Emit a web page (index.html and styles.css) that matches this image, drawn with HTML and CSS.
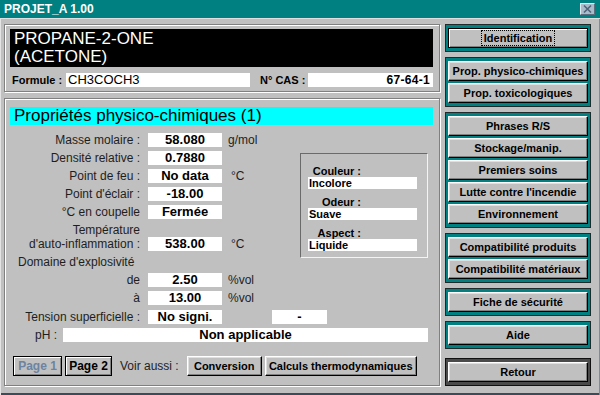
FILE: index.html
```html
<!DOCTYPE html>
<html lang="fr">
<head>
<meta charset="utf-8">
<title>PROJET_A 1.00</title>
<link rel="stylesheet" href="styles.css">
</head>
<body>
<div class="window">
  <div class="titlebar">
    <span class="title">PROJET_A 1.00</span>
    <span class="close"><svg width="13" height="10" viewBox="0 0 13 10"><path d="M3 1.5 L10 8.5 M10 1.5 L3 8.5" stroke="#4e6478" stroke-width="1.6" fill="none"/></svg></span>
  </div>
  <div class="main">
    <div class="left">
      <section class="panel ident">
        <div class="name">PROPANE-2-ONE<br>(ACETONE)</div>
        <div class="formula-row">
          <span class="flabel">Formule :</span>
          <span class="field formula">CH3COCH3</span>
          <span class="flabel cas-label">N° CAS :</span>
          <span class="field cas">67-64-1</span>
        </div>
      </section>
      <section class="panel props">
        <div class="props-title">Propriétés physico-chimiques (1)</div>
        <div class="props-upper">
          <div class="rows">
            <div class="row"><span class="lbl">Masse molaire :</span><span class="val">58.080</span><span class="unit">g/mol</span></div>
            <div class="row"><span class="lbl">Densité relative :</span><span class="val">0.7880</span></div>
            <div class="row"><span class="lbl">Point de feu :</span><span class="val">No data</span><span class="unit deg">°C</span></div>
            <div class="row"><span class="lbl">Point d'éclair :</span><span class="val">-18.00</span></div>
            <div class="row"><span class="lbl">°C en coupelle</span><span class="val">Fermée</span></div>
            <div class="row tall"><span class="lbl">Température<br>d'auto-inflammation :</span><span class="val">538.00</span><span class="unit deg">°C</span></div>
            <div class="row"><span class="lbl-left">Domaine d'explosivité</span></div>
            <div class="row"><span class="lbl">de</span><span class="val">2.50</span><span class="unit">%vol</span></div>
            <div class="row"><span class="lbl">à</span><span class="val">13.00</span><span class="unit">%vol</span></div>
          </div>
          <div class="aspect-box">
            <div class="alabel">Couleur :</div>
            <div class="afield">Incolore</div>
            <div class="alabel">Odeur :</div>
            <div class="afield">Suave</div>
            <div class="alabel">Aspect :</div>
            <div class="afield">Liquide</div>
          </div>
        </div>
        <div class="row tension"><span class="lbl">Tension superficielle :</span><span class="val">No signi.</span><span class="val val2">-</span></div>
        <div class="row ph"><span class="lbl ph-lbl">pH :</span><span class="val ph-val">Non applicable</span></div>
        <div class="bottom-bar">
          <button class="btn page page1">Page 1</button>
          <button class="btn page">Page 2</button>
          <span class="voir">Voir aussi :</span>
          <button class="btn conv">Conversion</button>
          <button class="btn calc">Calculs thermodynamiques</button>
        </div>
      </section>
    </div>
    <div class="right">
      <div class="grp"><button class="rbtn default"><span class="focus">Identification</span></button></div>
      <div class="grp">
        <button class="rbtn">Prop. physico-chimiques</button>
        <button class="rbtn">Prop. toxicologiques</button>
      </div>
      <div class="grp">
        <button class="rbtn">Phrases R/S</button>
        <button class="rbtn">Stockage/manip.</button>
        <button class="rbtn">Premiers soins</button>
        <button class="rbtn">Lutte contre l'incendie</button>
        <button class="rbtn">Environnement</button>
      </div>
      <div class="grp">
        <button class="rbtn">Compatibilité produits</button>
        <button class="rbtn">Compatibilité matériaux</button>
      </div>
      <div class="grp"><button class="rbtn">Fiche de sécurité</button></div>
      <div class="grp"><button class="rbtn">Aide</button></div>
      <div class="grp grp-dark"><button class="rbtn">Retour</button></div>
    </div>
  </div>
</div>
</body>
</html>
```
FILE: styles.css
```css
html, body {
  margin: 0;
  padding: 0;
  background: #c0c0c0;
}
body {
  font-family: "Liberation Sans", Arial, sans-serif;
  color: #000;
}
.window {
  width: 600px;
  height: 395px;
  box-sizing: border-box;
  background: #c0c0c0;
  box-shadow: inset 1px 0 #e4e4e4, inset -1px 0 #7d8c9c, inset 0 -2px #3c4a5a;
  overflow: hidden;
}
.titlebar {
  height: 18px;
  border-bottom: 1px solid #e0e0e0;
  background: #008080;
  display: flex;
  align-items: center;
  justify-content: space-between;
  padding: 0 5px 0 4px;
  color: #fff;
  font-weight: bold;
  font-size: 12px;
}
.close {
  width: 13px;
  height: 10px;
  background: #a9bccb;
  border: 1px solid;
  border-color: #e2eaf0 #5a6e80 #5a6e80 #e2eaf0;
  display: flex;
}
.main {
  display: flex;
  gap: 5px;
  padding: 5px 0 0 4px;
}
.left {
  width: 436px;
  display: flex;
  flex-direction: column;
  gap: 6px;
}
.panel {
  box-sizing: border-box;
  border: 1px solid #808080;
  box-shadow: inset 1px 1px #fff, 1px 1px #fff;
}
.ident {
  height: 68px;
  padding: 4px 6px 4px 5px;
}
.name {
  height: 38px;
  box-sizing: border-box;
  background: #000;
  color: #fff;
  font-size: 17px;
  line-height: 18px;
  padding: 1px 4px;
}
.formula-row {
  margin-top: 6px;
  height: 14px;
  display: flex;
  align-items: center;
}
.flabel {
  font-size: 11px;
  font-weight: bold;
  width: 54px;
  padding-left: 2px;
}
.cas-label {
  width: 48px;
  margin-left: 10px;
  padding-left: 0;
}
.field {
  height: 14px;
  background: #fff;
  font-size: 13px;
  line-height: 14px;
}
.formula {
  width: 182px;
  padding-left: 2px;
}
.cas {
  width: 122px;
  text-align: right;
  font-weight: bold;
  font-size: 12px;
  padding-right: 3px;
  letter-spacing: 0.3px;
}
.props {
  height: 288px;
  padding: 8px 6px 9px 5px;
  display: flex;
  flex-direction: column;
}
.props-title {
  height: 18px;
  background: #00ffff;
  font-size: 17px;
  line-height: 18px;
  padding-left: 4px;
}
.props-upper {
  display: flex;
  align-items: flex-start;
  margin-top: 8px;
}
.rows {
  width: 268px;
  display: flex;
  flex-direction: column;
  gap: 4px;
}
.row {
  display: flex;
  align-items: center;
  height: 14px;
  font-size: 12px;
  color: #1e1e1e;
}
.row.tall {
  height: 28px;
  align-items: flex-end;
}
.lbl {
  width: 130px;
  flex: none;
  text-align: right;
  line-height: 14px;
}
.lbl-left {
  padding-left: 8px;
}
.val {
  margin-left: 8px;
  width: 74px;
  flex: none;
  height: 14px;
  background: #fff;
  font-weight: bold;
  font-size: 13px;
  line-height: 14px;
  text-align: center;
  color: #000;
}
.unit {
  margin-left: 6px;
  line-height: 14px;
}
.unit.deg {
  margin-left: 9px;
}
.aspect-box {
  margin: 20px 0 0 22px;
  width: 128px;
  height: 105px;
  box-sizing: border-box;
  border: 1px solid;
  border-color: #6a6a6a #f4f4f4 #f4f4f4 #6a6a6a;
  padding: 12px 10px 0 7px;
  display: flex;
  flex-direction: column;
}
.alabel {
  width: 53px;
  text-align: right;
  font-size: 11px;
  font-weight: bold;
  line-height: 11px;
  height: 11px;
}
.alabel ~ .alabel {
  margin-top: 8px;
}
.afield {
  height: 12px;
  background: #fff;
  font-size: 11px;
  font-weight: bold;
  line-height: 12px;
  padding-left: 1px;
}
.tension {
  margin-top: 5px;
}
.val2 {
  margin-left: 50px;
  width: 55px;
}
.ph {
  margin-top: 4px;
}
.ph-lbl {
  width: 47px;
}
.ph-val {
  margin-left: 6px;
  width: 365px;
}
.bottom-bar {
  margin-top: auto;
  display: flex;
  align-items: center;
  height: 20px;
  padding-left: 3px;
}
.btn {
  box-sizing: border-box;
  height: 20px;
  padding: 0;
  background: #c0c0c0;
  border: 1px solid;
  border-color: #fff #000 #000 #fff;
  box-shadow: inset -1px -1px #808080, inset 1px 1px #dfdfdf;
  font-family: "Liberation Sans", Arial, sans-serif;
  font-weight: bold;
  font-size: 11px;
  color: #000;
}
.page {
  width: 47px;
  font-size: 12px;
  border-color: #000;
  box-shadow: inset 1px 1px #fff, inset -1px -1px #808080;
  margin-right: 3px;
}
.page1 {
  width: 49px;
  color: #6c84a2;
}
.voir {
  margin: 0 8px 0 5px;
  font-size: 12px;
  color: #1e1e1e;
}
.conv {
  width: 75px;
  margin-right: 3px;
}
.calc {
  width: 152px;
}
.right {
  width: 146px;
  display: flex;
  flex-direction: column;
  gap: 5px;
}
.grp {
  box-sizing: border-box;
  border: 1px solid #1f2a2a;
  background: #008080;
  padding: 3px 2px;
  display: flex;
  flex-direction: column;
  gap: 2px;
}
.grp-dark {
  margin-top: 4px;
  background: #4a4a4a;
  border-color: #111;
}
.rbtn {
  box-sizing: border-box;
  height: 20px;
  width: 140px;
  padding: 0;
  background: #c0c0c0;
  border: 1px solid;
  border-color: #fff #000 #000 #fff;
  box-shadow: inset -1px -1px #808080, inset 1px 1px #dfdfdf;
  font-family: "Liberation Sans", Arial, sans-serif;
  font-weight: bold;
  font-size: 11px;
  color: #000;
}
.rbtn.default {
  border-color: #000;
  box-shadow: inset 1px 1px #fff, inset -1px -1px #808080;
}
.focus {
  outline: 1px dotted #000;
  outline-offset: 1px;
  padding: 0 1px;
}
```
